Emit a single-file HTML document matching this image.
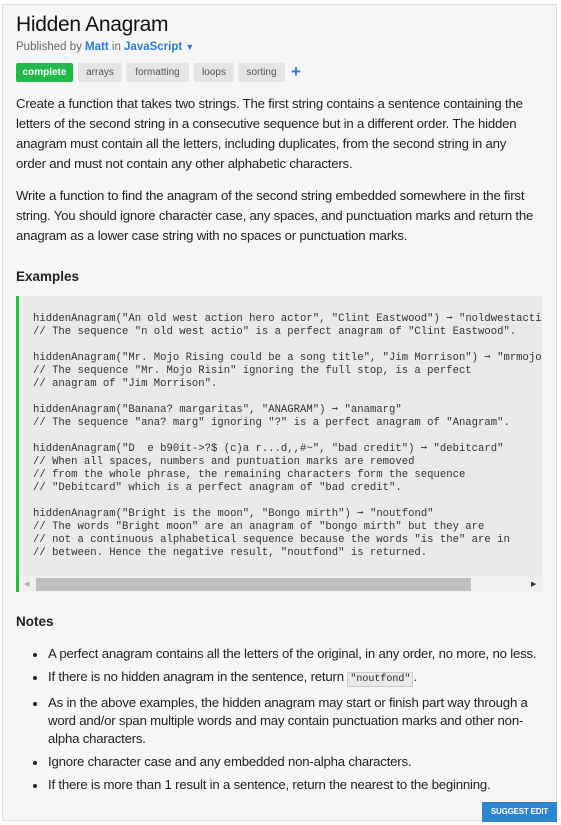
<!DOCTYPE html>
<html><head><meta charset="utf-8"><style>
*{margin:0;padding:0;box-sizing:border-box}
body{width:561px;height:825px;background:#fff;font-family:"Liberation Sans",sans-serif;color:#222;position:relative;overflow:hidden}
.card{position:absolute;left:2px;top:4px;width:555px;height:817px;background:#f6f6f6;border:1px solid #ddd}
.abs{position:absolute;white-space:nowrap}
h1{position:absolute;left:16px;top:13px;font-size:21px;font-weight:normal;color:#111;letter-spacing:-0.3px}
.pub{left:16px;top:41px;font-size:11.5px;color:#666}
.pub b{color:#2b7bd0;font-weight:bold}
.tag{position:absolute;top:63px;height:19px;border-radius:2px;background:#e4e4e4;color:#555;font-size:10px;line-height:19px;text-align:center}
.p{left:16px;font-size:13.2px;color:#222;line-height:20px;letter-spacing:-0.2px}
.h{left:16px;font-size:13.5px;font-weight:bold;color:#222}
.code{position:absolute;left:16px;top:296px;width:526px;height:296px;background:#e9e9e9;border-left:3px solid #2cb84a}
pre{position:absolute;left:14px;top:17px;font-family:"Liberation Mono",monospace;font-size:10.6px;line-height:13px;color:#333;white-space:pre;width:509px;overflow:hidden}
.sb{position:absolute;left:0;top:280px;width:523px;height:16px;background:#f0f0f0}
ul{position:absolute;left:48px;top:645px;font-size:13.2px;color:#222;letter-spacing:-0.2px;list-style:none}
li{position:relative;line-height:18px;margin-bottom:5px;white-space:nowrap}
li:before{content:"";position:absolute;left:-15px;top:8px;width:4px;height:4px;border-radius:50%;background:#222}
code{font-family:"Liberation Mono",monospace;font-size:10px;background:#e9e9e9;border:1px solid #ccc;padding:1px 2px;letter-spacing:0}
.btn{position:absolute;left:482px;top:802px;width:75px;height:20px;background:#2d84d0;color:#fff;font-size:8px;font-weight:bold;text-align:center;line-height:20px;letter-spacing:-0.2px}
</style></head><body>
<div class="card"></div>
<h1>Hidden Anagram</h1>
<div class="abs pub">Published by <b>Matt</b> in <b>JavaScript</b> <span style="color:#2b7bd0;font-size:9px">▼</span></div>
<div class="tag" style="left:16px;width:57px;background:#22b84a;color:#fff;font-weight:bold">complete</div>
<div class="tag" style="left:78px;width:44px">arrays</div>
<div class="tag" style="left:126px;width:63px">formatting</div>
<div class="tag" style="left:194px;width:40px">loops</div>
<div class="tag" style="left:238px;width:47px">sorting</div>
<div class="abs" style="left:291px;top:62px;color:#2b7bd0;font-size:17px;font-weight:bold">+</div>
<div class="abs p" style="top:94px">Create a function that takes two strings. The first string contains a sentence containing the<br>letters of the second string in a consecutive sequence but in a different order. The hidden<br>anagram must contain all the letters, including duplicates, from the second string in any<br>order and must not contain any other alphabetic characters.</div>
<div class="abs p" style="top:186px">Write a function to find the anagram of the second string embedded somewhere in the first<br>string. You should ignore character case, any spaces, and punctuation marks and return the<br>anagram as a lower case string with no spaces or punctuation marks.</div>
<div class="abs h" style="top:269px">Examples</div>
<div class="code"><pre>hiddenAnagram("An old west action hero actor", "Clint Eastwood") ➞ "noldwestactio"
// The sequence "n old west actio" is a perfect anagram of "Clint Eastwood".

hiddenAnagram("Mr. Mojo Rising could be a song title", "Jim Morrison") ➞ "mrmojorisin"
// The sequence "Mr. Mojo Risin" ignoring the full stop, is a perfect
// anagram of "Jim Morrison".

hiddenAnagram("Banana? margaritas", "ANAGRAM") ➞ "anamarg"
// The sequence "ana? marg" ignoring "?" is a perfect anagram of "Anagram".

hiddenAnagram("D  e b90it->?$ (c)a r...d,,#~", "bad credit") ➞ "debitcard"
// When all spaces, numbers and puntuation marks are removed
// from the whole phrase, the remaining characters form the sequence
// "Debitcard" which is a perfect anagram of "bad credit".

hiddenAnagram("Bright is the moon", "Bongo mirth") ➞ "noutfond"
// The words "Bright moon" are an anagram of "bongo mirth" but they are
// not a continuous alphabetical sequence because the words "is the" are in
// between. Hence the negative result, "noutfond" is returned.</pre>
<div class="sb"><div style="position:absolute;left:17px;top:2px;width:435px;height:13px;background:#bfbfbf"></div><div style="position:absolute;left:5px;top:4px;font-size:7px;color:#aaa">◀</div><div style="position:absolute;left:512px;top:4px;font-size:7px;color:#333">▶</div></div></div>
<div class="abs h" style="top:614px">Notes</div>
<ul>
<li>A perfect anagram contains all the letters of the original, in any order, no more, no less.</li>
<li>If there is no hidden anagram in the sentence, return <code>"noutfond"</code>.</li>
<li>As in the above examples, the hidden anagram may start or finish part way through a<br>word and/or span multiple words and may contain punctuation marks and other non-<br>alpha characters.</li>
<li>Ignore character case and any embedded non-alpha characters.</li>
<li>If there is more than 1 result in a sentence, return the nearest to the beginning.</li>
</ul>
<div class="btn">SUGGEST EDIT</div>
</body></html>
